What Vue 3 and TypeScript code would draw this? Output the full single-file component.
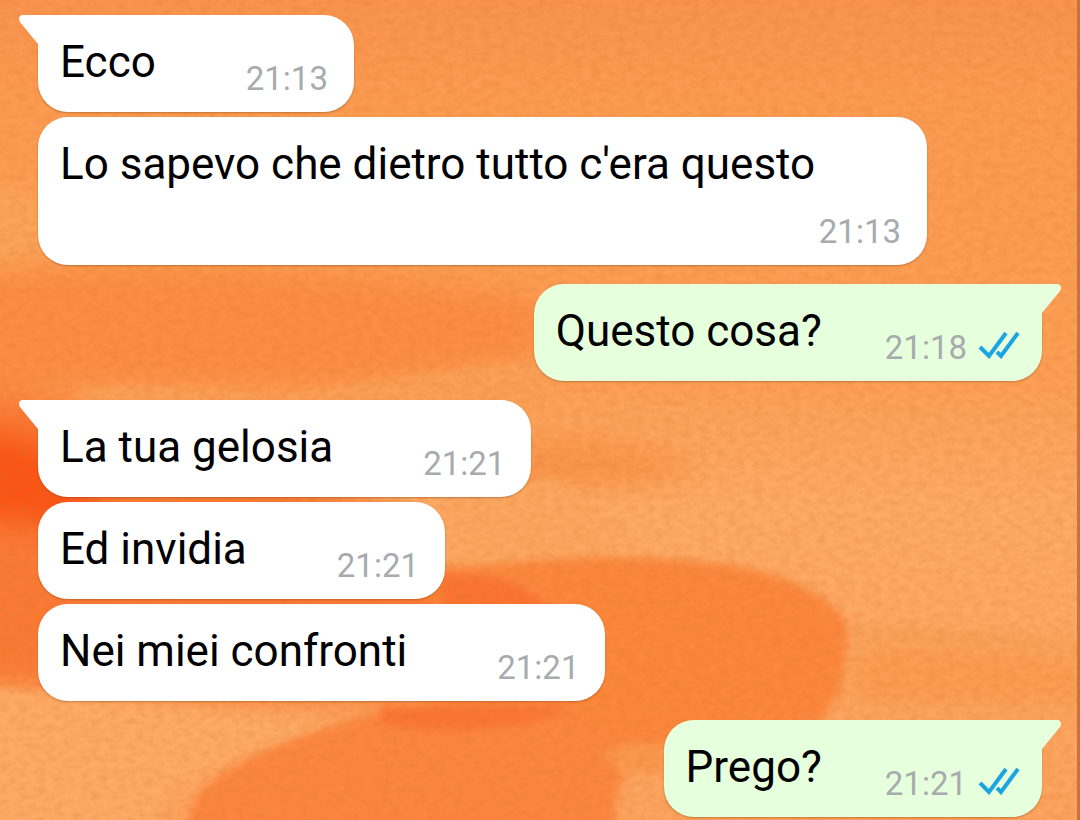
<script setup lang="ts">
interface Message {
  id: number
  text: string
  time: string
  sent: boolean
  first: boolean
}

const messages: Message[] = [
  { id: 1, text: 'Ecco', time: '21:13', sent: false, first: true },
  { id: 2, text: "Lo sapevo che dietro tutto c'era questo", time: '21:13', sent: false, first: false },
  { id: 3, text: 'Questo cosa?', time: '21:18', sent: true, first: true },
  { id: 4, text: 'La tua gelosia', time: '21:21', sent: false, first: true },
  { id: 5, text: 'Ed invidia', time: '21:21', sent: false, first: false },
  { id: 6, text: 'Nei miei confronti', time: '21:21', sent: false, first: false },
  { id: 7, text: 'Prego?', time: '21:21', sent: true, first: true },
]
</script>

<template>
  <main class="chat">
    <svg class="wallpaper" viewBox="0 0 1080 820" preserveAspectRatio="none" aria-hidden="true">
      <defs>
        <filter id="soft" x="-20%" y="-20%" width="140%" height="140%"><feGaussianBlur stdDeviation="14" /></filter>
        <filter id="edge" x="-20%" y="-20%" width="140%" height="140%"><feGaussianBlur stdDeviation="5" /></filter>
        <filter id="grain" x="0" y="0" width="100%" height="100%" color-interpolation-filters="sRGB">
          <feTurbulence type="fractalNoise" baseFrequency="0.11 0.16" numOctaves="3" seed="8" />
          <feColorMatrix values="0 0 0 0 0.82  0 0 0 0 0.43  0 0 0 0 0.12  1.4 0 0 0 -0.45" />
        </filter>
        <linearGradient id="base" x1="0" y1="0" x2="0" y2="1">
          <stop offset="0" stop-color="#fa944f" />
          <stop offset="0.12" stop-color="#fc9c53" />
          <stop offset="0.45" stop-color="#fd9f56" />
          <stop offset="0.62" stop-color="#fdac68" />
          <stop offset="1" stop-color="#fda460" />
        </linearGradient>
      </defs>
      <rect width="1080" height="820" fill="url(#base)" />
      <g filter="url(#soft)">
        <path d="M-30 190H40V262H-30Z" fill="#fca65c" />
        <path d="M-30 275C120 260 330 268 540 300V355C430 375 300 395 240 385L70 385L-30 400Z" fill="#fc8d45" />
        <path d="M-30 395L60 400L150 440L330 490L420 520L470 560L640 580V700H340L-30 685Z" fill="#fb7a36" />
        <path d="M-30 425L40 440L110 500L60 530L-30 520Z" fill="#fb5419" />
        <path d="M500 440C600 435 680 450 700 470C650 490 560 490 500 485Z" fill="#fb954b" />
        <path d="M860 640C950 640 1040 650 1100 660V700C1020 715 930 705 840 705Z" fill="#fb9d53" />
      </g>
      <g filter="url(#edge)">
        <path d="M80 392C160 378 220 398 290 394C380 384 480 362 550 362V405H80Z" fill="#fba058" />
        <path d="M440 490L560 480L640 540L560 560L430 568Z" fill="#fca862" />
        <path d="M430 576C500 556 640 552 730 565C800 576 846 606 848 632C842 690 840 720 780 745H430Z" fill="#fc873e" />
        <path d="M440 576C490 570 530 585 550 610H440Z" fill="#fb7331" />
        <path d="M848 632C920 628 1000 640 1080 644" fill="none" stroke="#f39c4f" stroke-width="4" />
        <path d="M-20 688L90 698L330 726L240 755L170 790L150 840H-20Z" fill="#fdac67" />
        <path d="M330 726C420 695 540 690 620 735C640 770 600 800 620 840H190C175 790 240 755 330 726Z" fill="#fc863f" />
        <path d="M380 706H570C550 725 440 740 380 722Z" fill="#fb7532" />
        <path d="M600 752L665 745V775L620 772Z" fill="#fb994f" />
      </g>
      <rect width="1080" height="820" filter="url(#grain)" opacity="0.28" />
      <path d="M1077 0H1080V820H1077Z" fill="#c87439" />
    </svg>

    <ol class="messages">
      <li
        v-for="message in messages"
        :key="message.id"
        class="bubble"
        :class="{ sent: message.sent, first: message.first }"
      >
        <svg v-if="message.first" class="tail" viewBox="0 0 20 30" aria-hidden="true">
          <path d="M20 0H4C0 0 -1 4 1 7L19 29H20Z" />
        </svg>
        <span class="text">{{ message.text }}</span>
        <span class="meta">
          <time>{{ message.time }}</time>
          <svg v-if="message.sent" class="ticks" viewBox="0 0 42 28" role="img" aria-label="Letto">
            <path d="M2 16L11 25L28 2M19 21L23 25L40 2" />
          </svg>
        </span>
      </li>
    </ol>
  </main>
</template>

<style>
body {
  margin: 0;
}
</style>

<style scoped>
.chat {
  position: relative;
  min-height: 100vh;
  box-sizing: border-box;
  overflow: hidden;
  font-family: Roboto, "Liberation Sans", sans-serif;
}

.wallpaper {
  position: absolute;
  inset: 0;
  width: 100%;
  height: 100%;
}

.messages {
  position: relative;
  display: flex;
  flex-direction: column;
  align-items: flex-start;
  gap: 5px;
  margin: 0;
  padding: 1px 38px 2px;
  list-style: none;
}

.bubble {
  position: relative;
  display: flex;
  flex-wrap: wrap;
  column-gap: 90px;
  box-sizing: border-box;
  max-width: calc(100% - 115px);
  padding: 22px 26px 24px 22px;
  border-radius: 30px;
  background: #fff;
  box-shadow: 0 1px 2px rgba(120, 60, 10, 0.4);
  color: #000;
}

.bubble.first {
  margin-top: 14px;
  border-top-left-radius: 0;
}

.bubble.sent {
  align-self: flex-end;
  column-gap: 63px;
  padding-right: 22px;
  border-radius: 30px 0 30px 30px;
  background: #e6ffdc;
}

.text {
  font-size: 44px;
  line-height: 51px;
}

.meta {
  display: flex;
  align-items: center;
  gap: 11px;
  margin-left: auto;
  padding-top: 16px;
  margin-bottom: -16px;
  color: #a7abad;
  font-size: 33px;
  line-height: 51px;
}

.tail {
  position: absolute;
  top: 0;
  left: -19px;
  width: 20px;
  height: 30px;
  fill: #fff;
}

.sent .tail {
  right: -19px;
  left: auto;
  transform: scaleX(-1);
  fill: #e6ffdc;
}

.ticks {
  width: 42px;
  height: 28px;
  margin-bottom: 6px;
  fill: none;
  stroke: #1aa5e2;
  stroke-width: 4;
}
</style>
